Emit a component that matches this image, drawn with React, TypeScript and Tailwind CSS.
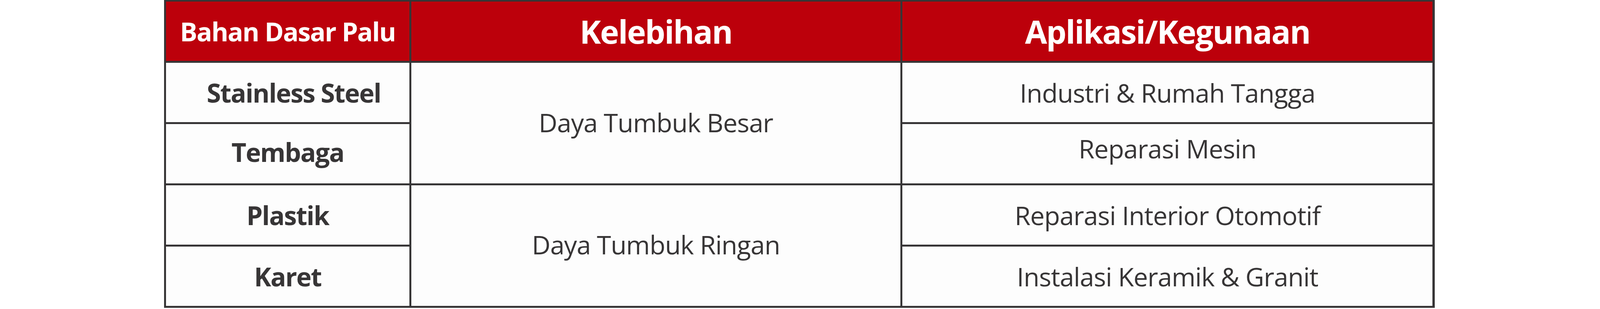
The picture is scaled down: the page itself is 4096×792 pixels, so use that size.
export default function App() {
  const cell = "flex items-center justify-center bg-[#fdfdfd] text-[#373536] leading-none"
  const head = "flex items-center justify-center bg-[#bc000b] text-white font-bold leading-none tracking-[-0.028em]"

  return (
    <div className="w-[4096px] h-[792px] bg-white font-['Open_Sans',sans-serif]">
      <div className="ml-[419.6px] w-[3253.4px] grid grid-cols-[622.9px_1251.2px_1357.3px] grid-rows-[151.6px_151.6px_151.6px_151.6px_151.6px] gap-[5.5px] bg-[#373536] px-[5.5px] pt-[4px] pb-[5.5px]">
        <div className={`${head} col-start-1 row-start-1 text-[66px]`}>Bahan Dasar Palu</div>
        <div className={`${head} col-start-2 row-start-1 text-[82px]`}>Kelebihan</div>
        <div className={`${head} col-start-3 row-start-1 text-[82px]`}>Aplikasi/Kegunaan</div>

        <div className={`${cell} col-start-1 row-start-2 text-[66px] font-bold tracking-[-0.028em] pl-[31px]`}>Stainless Steel</div>
        <div className={`${cell} col-start-1 row-start-3 text-[66px] font-bold tracking-[-0.028em] pb-[10px]`}>Tembaga</div>
        <div className={`${cell} col-start-1 row-start-4 text-[66px] font-bold tracking-[-0.028em]`}>Plastik</div>
        <div className={`${cell} col-start-1 row-start-5 text-[66px] font-bold tracking-[-0.028em]`}>Karet</div>

        <div className={`${cell} col-start-2 row-start-2 row-span-2 text-[66px] tracking-[-0.015em] pb-[4px]`}>Daya Tumbuk Besar</div>
        <div className={`${cell} col-start-2 row-start-4 row-span-2 text-[66px] tracking-[-0.015em] pb-[8px]`}>Daya Tumbuk Ringan</div>

        <div className={`${cell} col-start-3 row-start-2 text-[66px] tracking-[-0.015em]`}>Industri &amp; Rumah Tangga</div>
        <div className={`${cell} col-start-3 row-start-3 text-[66px] tracking-[-0.015em] pb-[28px]`}>Reparasi Mesin</div>
        <div className={`${cell} col-start-3 row-start-4 text-[66px] tracking-[-0.015em]`}>Reparasi Interior Otomotif</div>
        <div className={`${cell} col-start-3 row-start-5 text-[66px] tracking-[-0.015em]`}>Instalasi Keramik &amp; Granit</div>
      </div>
    </div>
  )
}
